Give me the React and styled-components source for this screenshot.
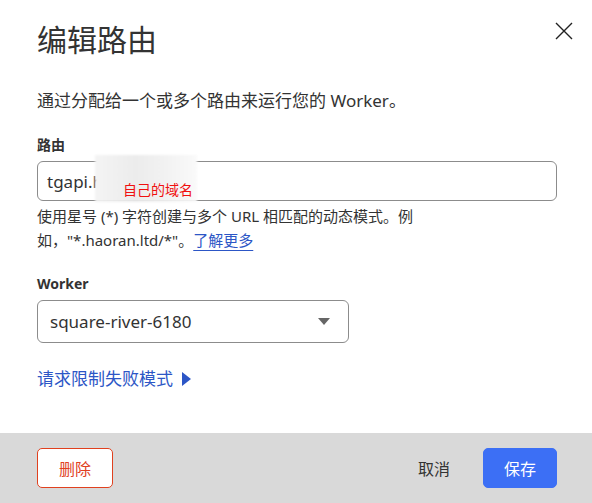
import React from 'react'
import styled, { createGlobalStyle } from 'styled-components'

const Global = createGlobalStyle`
  html, body { margin: 0; padding: 0; background: #fff; }
  body { font-family: "Noto Sans", "Noto Sans CJK SC", sans-serif; color: #313131; }
  * { box-sizing: border-box; }
`

const Dialog = styled.div`
  width: 592px;
  height: 503px;
  display: flex;
  flex-direction: column;
  background: #fff;
`

const Body = styled.div`
  flex: 1;
  padding: 18px 36px 0 37px;
  display: flex;
  flex-direction: column;
`

const Header = styled.div`
  display: flex;
  justify-content: space-between;
  align-items: flex-start;
`

const Title = styled.h1`
  margin: 0;
  font-size: 30px;
  font-weight: 400;
  line-height: 44px;
  color: #333;
`

const Close = styled.button`
  border: 0;
  background: none;
  padding: 0;
  margin: 2px -20px 0 0;
  width: 24px;
  height: 24px;
  cursor: pointer;
`

const Lead = styled.p`
  margin: 27px 0 0;
  font-size: 17px;
  line-height: 24px;
  color: #333;
`

const Label = styled.label`
  display: block;
  margin-top: ${(p) => p.$top}px;
  font-size: 14px;
  font-weight: 700;
  line-height: 20px;
  color: #333;
`

const Field = styled.div`
  position: relative;
  margin-top: 6px;
  width: ${(p) => p.$w}px;
  height: ${(p) => p.$h}px;
  border: 1px solid #8c8c8c;
  border-radius: 6px;
  display: flex;
  align-items: center;
  padding: 0 8px 0 ${(p) => p.$pl}px;
  font-size: 17px;
  color: #333;
`

const Blur = styled.div`
  position: absolute;
  left: 57px;
  top: -7px;
  width: 102px;
  height: 47px;
  background: linear-gradient(90deg, #f4f4f4, #ececec 40%, #f2f2f2 70%, #fafafa);
  filter: blur(1px);
`

const Note = styled.span`
  position: absolute;
  left: 85px;
  top: 19px;
  font-size: 14px;
  line-height: 18px;
  color: #f01010;
`

const Help = styled.p`
  margin: 3px 0 0;
  font-size: 15px;
  line-height: 24px;
  color: #333;
`

const Link = styled.a`
  color: #2c56c6;
  text-decoration: underline;
  text-underline-offset: 4px;
`

const Caret = styled.span`
  margin-left: auto;
  margin-right: 10px;
  width: 0;
  height: 0;
  border-left: 6px solid transparent;
  border-right: 6px solid transparent;
  border-top: 7px solid #666;
`

const Toggle = styled.div`
  margin-top: 24px;
  display: flex;
  align-items: center;
  gap: 9px;
  font-size: 17px;
  line-height: 24px;
  color: #2c56c6;
`

const Arrow = styled.span`
  width: 0;
  height: 0;
  border-top: 7px solid transparent;
  border-bottom: 7px solid transparent;
  border-left: 9px solid #2c56c6;
`

const Footer = styled.div`
  height: 70px;
  background: #d9d9d9;
  display: flex;
  align-items: center;
  padding: 0 35px 0 37px;
`

const Button = styled.button`
  height: 40px;
  padding: 0 ${(p) => p.$pad}px;
  border-radius: 5px;
  font-family: inherit;
  font-size: 16px;
  cursor: pointer;
  border: 1px solid ${(p) => p.$border};
  background: ${(p) => p.$bg};
  color: ${(p) => p.$color};
`

const Spacer = styled.div`
  flex: 1;
`

export default function App() {
  return (
    <>
      <Global />
      <Dialog>
        <Body>
          <Header>
            <Title>编辑路由</Title>
            <Close aria-label="关闭">
              <svg width="20" height="20" viewBox="0 0 20 20">
                <path d="M2 2 L18 18 M18 2 L2 18" stroke="#222" strokeWidth="1.4" fill="none" />
              </svg>
            </Close>
          </Header>
          <Lead>通过分配给一个或多个路由来运行您的 Worker。</Lead>
          <Label $top={22}>路由</Label>
          <Field $w={520} $h={40} $pl={9}>
            tgapi.h
            <Blur />
            <Note>自己的域名</Note>
          </Field>
          <Help>
            使用星号 (*) 字符创建与多个 URL 相匹配的动态模式。例
            <br />
            如，"*.haoran.ltd/*"。<Link>了解更多</Link>
          </Help>
          <Label $top={22}>Worker</Label>
          <Field $w={312} $h={43} $pl={12}>
            square-river-6180
            <Caret />
          </Field>
          <Toggle>
            请求限制失败模式 <Arrow />
          </Toggle>
        </Body>
        <Footer>
          <Button $pad={21} $border="#e0411f" $bg="#fff" $color="#e0411f">删除</Button>
          <Spacer />
          <Button $pad={16} $border="transparent" $bg="transparent" $color="#333">取消</Button>
          <Button $pad={20} $border="#3c6ff5" $bg="#3c6ff5" $color="#fff" style={{ marginLeft: 16 }}>保存</Button>
        </Footer>
      </Dialog>
    </>
  )
}
